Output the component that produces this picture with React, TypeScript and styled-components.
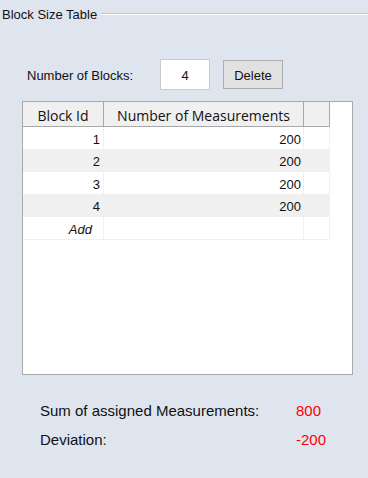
import React from "react";
import styled, { createGlobalStyle } from "styled-components";

const Global = createGlobalStyle`
  html, body {
    margin: 0;
    padding: 0;
    background: #dfe5ef;
  }
  body {
    width: 368px;
    height: 478px;
    overflow: hidden;
    font-family: "Liberation Sans", Arial, sans-serif;
    color: #111;
  }
`;

const Page = styled.div`
  width: 368px;
  height: 478px;
  display: flex;
  flex-direction: column;
`;

const TitleRow = styled.div`
  display: flex;
  align-items: flex-start;
  padding: 7px 0 0 2px;
`;

const Title = styled.span`
  font-size: 13px;
  line-height: 15px;
  white-space: nowrap;
`;

const TitleLine = styled.div`
  flex: 1;
  margin: 6px 0 0 4px;
  border-top: 1px solid #c3c8d0;
  border-bottom: 1px solid #ffffff;
`;

const Controls = styled.div`
  display: flex;
  align-items: center;
  margin: 37px 0 0 27px;
  height: 31px;
`;

const Label = styled.span`
  font-size: 13px;
  line-height: 15px;
  margin-top: 2px;
  width: 133px;
  white-space: nowrap;
`;

const NumberInput = styled.div`
  box-sizing: border-box;
  width: 50px;
  height: 31px;
  background: #fff;
  border: 1px solid #cbcbcb;
  display: flex;
  align-items: center;
  justify-content: center;
  font-size: 13px;
  padding-top: 1px;
`;

const Button = styled.button`
  box-sizing: border-box;
  margin-left: 13px;
  width: 60px;
  height: 29px;
  background: #e1e1e1;
  border: 1px solid #adadad;
  font-family: "Liberation Sans", Arial, sans-serif;
  font-size: 13px;
  color: #111;
  padding: 1px 0 0 0;
`;

const ScrollPane = styled.div`
  box-sizing: border-box;
  margin: 11px 0 0 22px;
  width: 331px;
  height: 274px;
  border: 1px solid #a9a9a9;
  background: #fff;
`;

const Grid = styled.div`
  display: grid;
  grid-template-columns: 81px 200px 26px;
  width: 307px;
`;

const HeadCell = styled.div`
  box-sizing: border-box;
  height: 25px;
  background: #f0f0f0;
  border-right: 1px solid #a9a9a9;
  border-bottom: 1px solid #a9a9a9;
  font-family: "Open Sans", "Noto Sans", sans-serif;
  font-size: 14px;
  line-height: 19px;
  padding-top: 4px;
  text-align: center;
  white-space: nowrap;
  color: #111;
`;

const Cell = styled.div<{ $alt?: boolean; $italic?: boolean; $pad?: number }>`
  box-sizing: border-box;
  height: 22.5px;
  background: ${(p) => (p.$alt ? "#f0f0f0" : "#ffffff")};
  border-right: 1px solid #f0f0f0;
  border-bottom: 1px solid #f0f0f0;
  font-size: 13px;
  line-height: 18px;
  padding-top: 3.5px;
  padding-right: ${(p) => p.$pad ?? 2}px;
  text-align: right;
  font-style: ${(p) => (p.$italic ? "italic" : "normal")};
  color: #111;
`;

const Summary = styled.div`
  display: grid;
  grid-template-columns: 256px auto;
  row-gap: 12px;
  margin: 27px 0 0 40px;
  font-size: 15px;
  line-height: 17px;
`;

const Value = styled.span`
  color: #ff0000;
`;

const rows = [
  { id: 1, n: 200 },
  { id: 2, n: 200 },
  { id: 3, n: 200 },
  { id: 4, n: 200 },
];

export default function App() {
  return (
    <Page>
      <Global />
      <TitleRow>
        <Title>Block Size Table</Title>
        <TitleLine />
      </TitleRow>
      <Controls>
        <Label>Number of Blocks:</Label>
        <NumberInput>4</NumberInput>
        <Button>Delete</Button>
      </Controls>
      <ScrollPane>
        <Grid>
          <HeadCell>Block Id</HeadCell>
          <HeadCell>Number of Measurements</HeadCell>
          <HeadCell />
          {rows.map((r, i) => (
            <React.Fragment key={r.id}>
              <Cell $alt={i % 2 === 1} $pad={3}>{r.id}</Cell>
              <Cell $alt={i % 2 === 1}>{r.n}</Cell>
              <Cell $alt={i % 2 === 1} />
            </React.Fragment>
          ))}
          <Cell $italic $pad={11}>Add</Cell>
          <Cell />
          <Cell />
        </Grid>
      </ScrollPane>
      <Summary>
        <span>Sum of assigned Measurements:</span>
        <Value>800</Value>
        <span>Deviation:</span>
        <Value>-200</Value>
      </Summary>
    </Page>
  );
}
